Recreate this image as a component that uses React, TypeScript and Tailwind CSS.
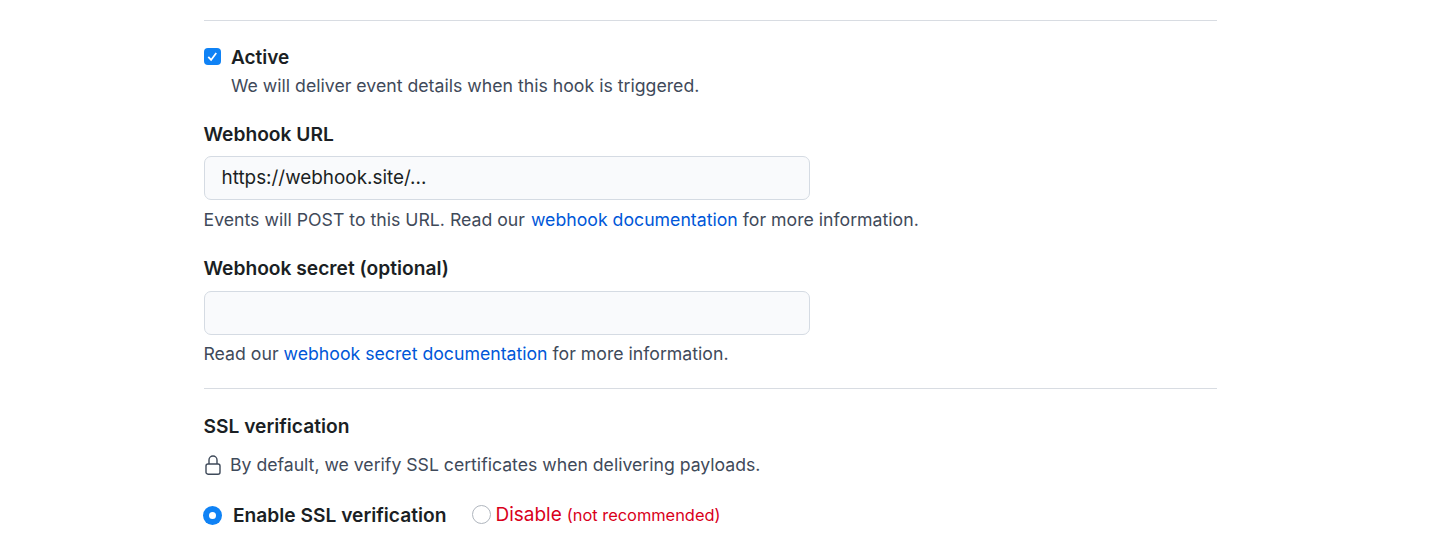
import React from "react";

export default function App() {
  return (
    <div className="w-[1456px] h-[539px] bg-white overflow-hidden font-['Inter','Liberation_Sans',sans-serif] text-[#1b1f24]">
      <div className="ml-[204px] w-[1013px] pt-5">
        <div className="h-px bg-[#d8dce2]" />
        <div className="flex items-start gap-[10px] mt-[27px]">
          <div className="w-[17px] h-[17px] rounded-[4px] bg-[#0f82f5] flex items-center justify-center">
            <svg viewBox="0 0 16 16" className="w-[15px] h-[15px]" fill="none" stroke="white" strokeWidth="1.9"><path d="M3.5 8.5l3 3.2 5.5-7.4" /></svg>
          </div>
          <div>
            <div className="text-[19px] leading-[19px] font-semibold">Active</div>
            <div className="text-[17.7px] leading-[22px] mt-[8px] text-[#3f4a5a]">We will deliver event details when this hook is triggered.</div>
          </div>
        </div>
        <div className="text-[19.2px] leading-[22px] font-semibold mt-[26px] -ml-[0.5px]">Webhook URL</div>
        <div className="w-[606px] h-[44px] mt-[11px] rounded-[7px] border border-[#d5dbe3] bg-[#f9fafc] flex items-center pl-[16.5px] text-[18.9px]">https://webhook.site/...</div>
        <div className="text-[17.7px] leading-[22px] mt-[9px] -ml-[0.5px] text-[#3f4a5a]">Events will POST to this URL. Read our <span className="text-[#0057d8] ml-[1px]">webhook documentation</span> for more information.</div>
        <div className="text-[19.2px] leading-[22px] font-semibold mt-[26px] -ml-[0.5px]">Webhook secret (optional)</div>
        <div className="w-[606px] h-[44px] mt-[12px] rounded-[7px] border border-[#d5dbe3] bg-[#f9fafc]" />
        <div className="text-[17.7px] leading-[22px] mt-[8px] -ml-[0.5px] text-[#3f4a5a]">Read our <span className="text-[#0057d8]">webhook secret documentation</span> for more information.</div>
        <div className="h-px bg-[#d8dce2] mt-[23px]" />
        <div className="text-[19.2px] leading-[22px] font-semibold mt-[26px] -ml-[0.5px]">SSL verification</div>
        <div className="flex items-center gap-[9px] mt-[17px] ml-[1px] text-[17.65px] leading-[22px] text-[#3f4a5a]">
          <svg viewBox="0 0 16 20" className="w-[16px] h-[20px] shrink-0 -mt-[1px]" fill="none" stroke="#3f4a5a" strokeWidth="1.4"><rect x="1" y="9" width="14" height="10.2" rx="2" /><path d="M4 9V5a4 4 0 018 0v4" /></svg>
          <span>By default, we verify SSL certificates when delivering payloads.</span>
        </div>
        <div className="flex items-center mt-[25px] -ml-[1px]">
          <div className="w-[19px] h-[19px] rounded-full bg-[#0f82f5] flex items-center justify-center"><div className="w-[7px] h-[7px] rounded-full bg-white" /></div>
          <span className="ml-[11px] text-[19.2px] font-semibold">Enable SSL verification</span>
          <div className="w-[19px] h-[19px] rounded-full border border-[#b0b6be] bg-white ml-[26px] -mt-[2px]" />
          <span className="ml-[4px] text-[19px] text-[#d9001b]">Disable</span>
          <span className="ml-[5px] text-[16.4px] text-[#d9001b]">(not recommended)</span>
        </div>
      </div>
    </div>
  );
}
